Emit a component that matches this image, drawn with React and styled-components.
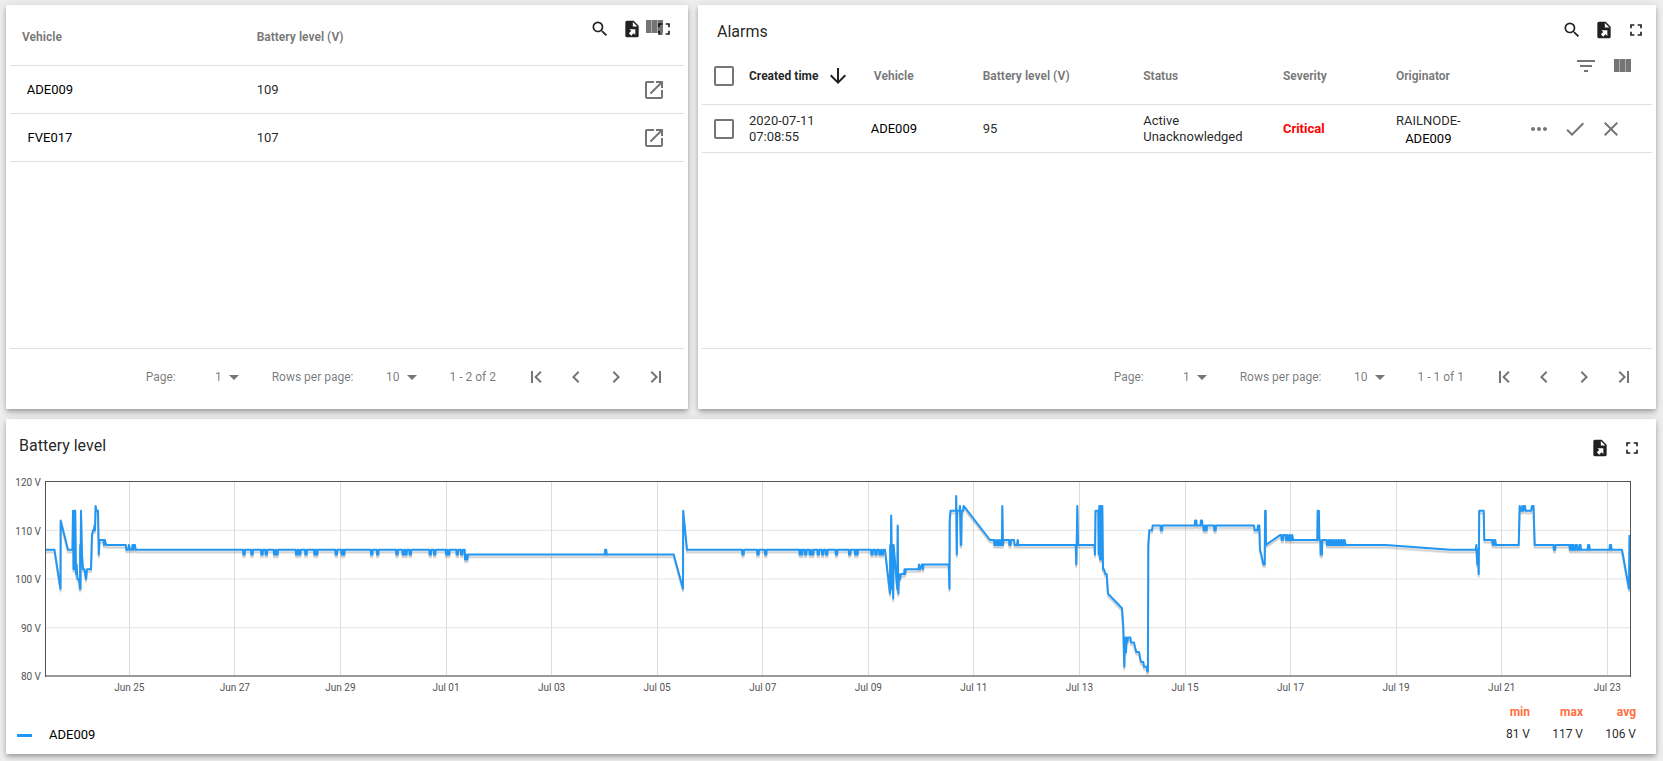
import { useState } from "react";
import styled, { createGlobalStyle } from "styled-components";
import {
  MdArrowDownward,
  MdCheck,
  MdChevronLeft,
  MdChevronRight,
  MdClose,
  MdFilterList,
  MdFullscreen,
  MdMoreHoriz,
  MdOpenInNew,
  MdSearch,
} from "react-icons/md";

const vehicles = [
  { name: "ADE009", level: 109 },
  { name: "FVE017", level: 107 },
];

const alarms = [
  {
    date: "2020-07-11",
    time: "07:08:55",
    vehicle: "ADE009",
    level: 95,
    status: ["Active", "Unacknowledged"],
    severity: "Critical",
    originator: ["RAILNODE-", "ADE009"],
  },
];

// short spikes from one level to another, one for each x
const blips = (base, peak, xs) =>
  xs.flatMap((x) => [[x - 1, base], [x - 0.6, peak], [x + 0.6, peak], [x + 1, base]]);

const series = [
  [45, 106], [54.5, 106], [60.5, 98], [60.7, 112], [68, 106], [72.5, 106], [73, 114], [73.5, 102],
  [74, 114], [74.7, 102], [75.2, 114], [76, 101], [76.6, 103], [77.5, 100], [79, 100], [80, 98],
  [80.2, 107], [80.5, 98], [81, 114], [82, 105], [83, 102], [84.5, 102], [86, 100], [87, 102],
  [91, 102], [92, 109], [93, 110], [94, 110], [94.5, 111], [95, 110], [95.6, 115], [96.5, 114],
  [98, 114], [98.8, 105], [99.5, 108], [103.5, 108], [104, 107], [105, 108], [106, 107],
  [125.8, 107], [126.4, 106], [128, 106], [129, 107], [130, 106], [132, 106], [132.5, 107],
  [133.3, 106], [134, 107], [135, 107], [135.6, 106],
  ...blips(106, 105, [
    244, 252, 262, 266.3, 274.7, 277, 296.7, 299.7, 306, 315, 316.7, 336.3, 342.3, 343.7, 371.7,
    377.7, 397, 403.3, 406, 410.3, 430.3, 434.7, 446.7, 448.7, 457.3, 461.7,
  ]),
  [464.7, 106], [465, 104], [466, 105], [466.6, 104], [467.4, 104], [468, 105],
  ...blips(105, 106, [605.7]),
  [673.7, 105], [683, 98], [683.2, 114], [687, 106],
  ...blips(106, 105, [
    743, 758, 765.7, 800.3, 801.7, 805.7, 810.3, 812.7, 818.3, 822.7, 826.7, 836.5, 849.7, 855.7,
    857, 872, 876, 880, 882.3,
  ]),
  [885, 106], [890, 97], [890.2, 107], [890.6, 98], [891.2, 113], [892, 98], [892.6, 107],
  [893.2, 96], [893.6, 107], [897.3, 98], [897.7, 111], [898.3, 97], [899, 101], [900, 100],
  [901, 101], [904, 101], [904.5, 102], [905, 101], [906, 102], [918.5, 102], [919, 103],
  [920, 102], [922, 103], [923, 102], [923.5, 103], [948.7, 103], [949.5, 98], [949.7, 112],
  [950.5, 114], [956, 114], [956.2, 117], [956.8, 105], [957.2, 114], [959.5, 114], [960, 115],
  [960.8, 107], [961.2, 107], [961.7, 114], [963, 114], [963.7, 115], [990, 108], [994, 108],
  ...blips(108, 107, [995, 997, 999, 1001]),
  [1002, 108], [1002.3, 115], [1003, 107], [1003.6, 108],
  ...blips(108, 107, [1010]),
  [1014, 108], [1014.6, 107], [1017, 107], [1017.7, 108], [1018.4, 107], [1075.7, 107],
  [1076.3, 103], [1076.7, 107], [1077.3, 115], [1078, 107], [1094.5, 107], [1095, 105],
  [1095.5, 114], [1098.3, 114], [1098.7, 105], [1099.3, 115], [1100, 104], [1100.6, 115],
  [1101.2, 104], [1101.7, 115], [1102.3, 115], [1103, 102], [1104, 102], [1105.3, 101],
  [1106.7, 101], [1108, 97], [1122, 94], [1123.3, 90], [1124.3, 82], [1125, 88], [1126, 85],
  [1126.5, 88], [1127.3, 87], [1128, 88], [1130.3, 88], [1131, 87], [1134, 87], [1135, 86],
  [1136.3, 85], [1139, 85], [1141, 83], [1143.3, 83], [1144, 82], [1146.7, 82], [1147.3, 81],
  [1147.9, 81], [1148.3, 107], [1149.3, 110], [1152, 110], [1152.7, 111],
  ...blips(111, 110, [1161.5]),
  ...blips(111, 112, [1195.7, 1201.5]),
  ...blips(111, 110, [1204.3, 1206, 1215]),
  [1254, 111], [1254.7, 110], [1257.3, 110], [1258, 111], [1259.3, 111], [1260, 106],
  [1261.3, 105], [1263.3, 103], [1264.7, 103], [1265.1, 114], [1265.7, 114], [1266, 107],
  [1280, 109],
  ...blips(109, 108, [1282.3, 1286.5, 1288.5, 1291]),
  [1292.3, 109], [1293, 108],
  ...blips(108, 114, [1318.3]),
  ...blips(108, 105, [1321.3]),
  ...blips(108, 107, [1327.5, 1330, 1332.5, 1335, 1337.5, 1340, 1342.5]),
  [1344, 107], [1344.6, 108], [1345.6, 107], [1385.7, 107], [1450.3, 106], [1475.7, 106],
  [1476.3, 107], [1477.3, 103], [1478, 106], [1478.7, 101], [1479.2, 114], [1483.7, 114],
  [1484.3, 108], [1492, 108], [1492.7, 107], [1494, 108], [1494.6, 107], [1495.2, 108],
  [1496, 107], [1518.7, 107], [1519.7, 115], [1520.7, 114], [1521.7, 114], [1522.3, 115],
  [1523.3, 114], [1524, 115], [1525, 115], [1525.7, 114], [1531, 114], [1532, 115],
  [1533.5, 115], [1534.7, 107],
  ...blips(107, 106, [1554.5]),
  [1569.3, 107], [1570, 106],
  ...blips(106, 107, [1571.5, 1573, 1576.3, 1580, 1588.7, 1610.5]),
  [1622, 106], [1629, 98], [1629.5, 109],
];

const PLOT_START = 45;
const PLOT_WIDTH = 1586;
const PLOT_HEIGHT = 196;

const yOf = (volts) => 0.5 + ((120 - volts) * (PLOT_HEIGHT - 1)) / 40;
const linePoints = series.map(([x, v]) => `${x},${yOf(v).toFixed(1)}`).join(" ");

const voltTicks = [120, 110, 100, 90, 80];
const dayTicks = [
  "Jun 25", "Jun 27", "Jun 29", "Jul 01", "Jul 03", "Jul 05", "Jul 07", "Jul 09",
  "Jul 11", "Jul 13", "Jul 15", "Jul 17", "Jul 19", "Jul 21", "Jul 23",
].map((label, i) => ({
  label,
  x: `${((84.3 + i * 105.57) / PLOT_WIDTH) * 100}%`,
}));

const FileExportIcon = ({ size }) => (
  <svg width={size} height={size} viewBox="0 0 24 24" fill="currentColor">
    <path
      fillRule="evenodd"
      d="M6,2C4.89,2 4,2.9 4,4V20A2,2 0 0,0 6,22H18A2,2 0 0,0 20,20V8L14,2M13,3.5L18.5,9H13M8.93,12.22H16V19.29L13.88,17.17L11.05,20L8.22,17.17L11.05,14.35"
    />
  </svg>
);

const ViewColumnIcon = ({ size }) => (
  <svg width={size} height={size} viewBox="0 0 24 24" fill="currentColor">
    <path d="M9.7 18h5.6V5H9.7v13zM4 18h5.3V5H4v13zM15.7 5v13H21V5h-5.3z" />
  </svg>
);

const FirstPageIcon = ({ size }) => (
  <svg width={size} height={size} viewBox="0 0 24 24" fill="currentColor">
    <path d="M7 6v12h2V6zM17.6 7.4L16.2 6l-6 6 6 6 1.4-1.4L13 12z" />
  </svg>
);

const LastPageIcon = ({ size }) => (
  <svg width={size} height={size} viewBox="0 0 24 24" fill="currentColor">
    <path d="M15 6v12h2V6zM8 6L6.6 7.4l4.6 4.6-4.6 4.6L8 18l6-6z" />
  </svg>
);

const WidgetActions = ({ search, ...rest }) => (
  <Actions {...rest}>
    {search && (
      <ToolButton type="button" aria-label="Search"><MdSearch size={20} /></ToolButton>
    )}
    <ToolButton type="button" aria-label="Export widget"><FileExportIcon size={20} /></ToolButton>
    <ToolButton type="button" aria-label="Fullscreen"><MdFullscreen size={20} /></ToolButton>
  </Actions>
);

const Picker = ({ id, label, options }) => {
  const [value, setValue] = useState(options[0]);

  return (
    <PickerWrapper>
      <label htmlFor={id}>{label}</label>
      <SelectBox>
        <Select id={id} value={value} onChange={(event) => setValue(event.target.value)}>
          {options.map((option) => (
            <option key={option} value={option}>{option}</option>
          ))}
        </Select>
        <svg width="10" height="5" viewBox="0 0 10 5" fill="currentColor">
          <path d="M0 0h10L5 5z" />
        </svg>
      </SelectBox>
    </PickerWrapper>
  );
};

const Pagination = ({ id, range }) => (
  <PaginationBar>
    <Picker id={`${id}-page`} label="Page:" options={["1"]} />
    <Picker id={`${id}-rows`} label="Rows per page:" options={["10", "20", "30"]} />
    <span>{range}</span>
    <Pager>
      <PagerButton type="button" aria-label="First page"><FirstPageIcon size={24} /></PagerButton>
      <PagerButton type="button" aria-label="Previous page"><MdChevronLeft size={24} /></PagerButton>
      <PagerButton type="button" aria-label="Next page"><MdChevronRight size={24} /></PagerButton>
      <PagerButton type="button" aria-label="Last page"><LastPageIcon size={24} /></PagerButton>
    </Pager>
  </PaginationBar>
);

const VehiclesWidget = () => (
  <Card>
    <WidgetActions search $floating />
    <TableArea>
      <Table>
        <colgroup>
          <Col $width="36.6%" />
          <Col />
          <Col $width="60px" />
        </colgroup>
        <thead>
          <tr>
            <Th $indent={12}>Vehicle</Th>
            <Th>Battery level (V)</Th>
            <ToolsTh>
              <IconRow $end={18}>
                <CellButton type="button" aria-label="Columns"><ViewColumnIcon size={24} /></CellButton>
              </IconRow>
            </ToolsTh>
          </tr>
        </thead>
        <tbody>
          {vehicles.map((vehicle) => (
            <tr key={vehicle.name}>
              <Td $indent={12}><VehicleName>{vehicle.name}</VehicleName></Td>
              <Td>{vehicle.level}</Td>
              <Td>
                <IconRow $end={18}>
                  <CellButton type="button" aria-label={`Open ${vehicle.name}`}>
                    <MdOpenInNew size={24} />
                  </CellButton>
                </IconRow>
              </Td>
            </tr>
          ))}
        </tbody>
      </Table>
    </TableArea>
    <Pagination id="vehicles" range="1 - 2 of 2" />
  </Card>
);

const AlarmsWidget = () => (
  <Card>
    <TitleBar>
      <Title $indent={15}>Alarms</Title>
      <WidgetActions search $top={5} />
    </TitleBar>
    <TableArea>
      <Table>
        <colgroup>
          <Col $width="47px" />
          <Col $width="12.3%" />
          <Col $width="12.3%" />
          <Col $width="16.9%" />
          <Col $width="14.7%" />
          <Col $width="11.9%" />
          <Col />
          <Col $width="131px" />
        </colgroup>
        <thead>
          <tr>
            <Th $indent={12}><Checkbox type="checkbox" aria-label="Select all alarms" /></Th>
            <Th $active>
              <SortLabel>
                Created time
                <MdArrowDownward size={24} />
              </SortLabel>
            </Th>
            <Th $indent={8}>Vehicle</Th>
            <Th>Battery level (V)</Th>
            <Th>Status</Th>
            <Th>Severity</Th>
            <Th>Originator</Th>
            <ToolsTh>
              <IconRow $end={18}>
                <CellButton type="button" aria-label="Filter"><MdFilterList size={24} /></CellButton>
                <CellButton type="button" aria-label="Columns"><ViewColumnIcon size={24} /></CellButton>
              </IconRow>
            </ToolsTh>
          </tr>
        </thead>
        <tbody>
          {alarms.map((alarm) => (
            <tr key={alarm.date + alarm.time}>
              <Td $indent={12}><Checkbox type="checkbox" aria-label="Select alarm" /></Td>
              <Td>{alarm.date}<br />{alarm.time}</Td>
              <Td><VehicleName>{alarm.vehicle}</VehicleName></Td>
              <Td>{alarm.level}</Td>
              <Td>{alarm.status[0]}<br />{alarm.status[1]}</Td>
              <Td><Severity>{alarm.severity}</Severity></Td>
              <Td>
                <Originator>
                  {alarm.originator[0]}<br />
                  <b>{alarm.originator[1]}</b>
                </Originator>
              </Td>
              <Td>
                <IconRow $end={29}>
                  <CellButton type="button" aria-label="Details"><MdMoreHoriz size={24} /></CellButton>
                  <CellButton type="button" aria-label="Acknowledge"><MdCheck size={24} /></CellButton>
                  <CellButton type="button" aria-label="Clear"><MdClose size={24} /></CellButton>
                </IconRow>
              </Td>
            </tr>
          ))}
        </tbody>
      </Table>
    </TableArea>
    <Pagination id="alarms" range="1 - 1 of 1" />
  </Card>
);

const Chart = () => (
  <ChartRow>
    <YAxis>
      {voltTicks.map((volts) => (
        <span key={volts}>{volts} V</span>
      ))}
    </YAxis>
    <Plot role="img" aria-label="Battery level of ADE009">
      {voltTicks.slice(1, 4).map((volts) => (
        <line key={volts} x1="0" x2="100%" y1={yOf(volts)} y2={yOf(volts)} stroke="#e2e2e2" />
      ))}
      {dayTicks.map((day) => (
        <g key={day.label}>
          <line x1={day.x} x2={day.x} y1="0" y2={PLOT_HEIGHT} stroke="#dcdcdc" shapeRendering="crispEdges" />
          <text x={day.x} y="210" textAnchor="middle">{day.label}</text>
        </g>
      ))}
      <svg
        width="100%"
        height={PLOT_HEIGHT}
        viewBox={`${PLOT_START} 0 ${PLOT_WIDTH} ${PLOT_HEIGHT}`}
        preserveAspectRatio="none"
        fill="none"
        strokeLinejoin="round"
      >
        <polyline points={linePoints} transform="translate(0 3)" stroke="#000" strokeOpacity="0.1" strokeWidth="2" />
        <polyline points={linePoints} transform="translate(0 2)" stroke="#000" strokeOpacity="0.1" strokeWidth="2" />
        <polyline points={linePoints} stroke="#2196f3" strokeWidth="2" />
      </svg>
      {/* the plot clips the outer half of the frame's side and top strokes */}
      <line x1="0" x2="100%" y1={PLOT_HEIGHT - 1} y2={PLOT_HEIGHT - 1} stroke="#999" strokeWidth="2" />
      <Frame x1="0" x2="100%" y1="0" y2="0" />
      <Frame x1="0" x2="0" y1="0" y2={PLOT_HEIGHT} />
      <Frame x1="100%" x2="100%" y1="0" y2={PLOT_HEIGHT} />
    </Plot>
  </ChartRow>
);

const BatteryWidget = () => (
  <Card>
    <TitleBar $tall>
      <Title $indent={9}>Battery level</Title>
      <WidgetActions $top={9} />
    </TitleBar>
    <Chart />
    <Legend>
      <LegendItem><Swatch />ADE009</LegendItem>
      <Stats>
        <thead>
          <tr><th>min</th><th>max</th><th>avg</th></tr>
        </thead>
        <tbody>
          <tr><td>81 V</td><td>117 V</td><td>106 V</td></tr>
        </tbody>
      </Stats>
    </Legend>
  </Card>
);

const App = () => (
  <>
    <GlobalStyle />
    <Page>
      <TopRow>
        <VehiclesWidget />
        <AlarmsWidget />
      </TopRow>
      <BatteryWidget />
    </Page>
  </>
);

const GlobalStyle = createGlobalStyle`
  * {
    box-sizing: border-box;
  }
  body {
    margin: 0;
    background: #eee;
    color: rgba(0, 0, 0, 0.87);
    font-family: Roboto, "Liberation Sans", sans-serif;
    font-size: 13px;
  }
  button, select {
    font: inherit;
    color: inherit;
    background: none;
    border: none;
    padding: 0;
    margin: 0;
    cursor: pointer;
  }
  svg {
    display: block;
  }
`;
const Page = styled.main`
  display: flex;
  flex-direction: column;
  gap: 10px;
  min-height: 100vh;
  padding: 5px 7px 7px 6px;
`;
const TopRow = styled.div`
  flex: 1;
  display: grid;
  grid-template-columns: minmax(0, 682fr) minmax(0, 958fr);
  gap: 10px;
`;
const Card = styled.section`
  position: relative;
  display: flex;
  flex-direction: column;
  padding: 4px;
  background: white;
  border-radius: 1px;
  box-shadow: 0 2px 4px -1px rgba(0, 0, 0, 0.2), 0 4px 5px 0 rgba(0, 0, 0, 0.14),
    0 1px 10px 0 rgba(0, 0, 0, 0.12);
`;
const TitleBar = styled.header`
  display: flex;
  justify-content: space-between;
  align-items: flex-start;
  height: ${({ $tall }) => ($tall ? 53 : 39)}px;
  padding-right: ${({ $tall }) => ($tall ? 4 : 0)}px;
`;
const Title = styled.h2`
  margin: 0;
  padding: 11px 0 0 ${({ $indent }) => $indent}px;
  font-size: 16px;
  font-weight: 400;
  line-height: 24px;
`;
const Actions = styled.div`
  display: flex;
  padding-top: ${({ $top = 0 }) => $top}px;
  ${({ $floating }) => $floating && `
    position: absolute;
    top: 8px;
    right: 8px;
    z-index: 1;
  `}
`;
const ToolButton = styled.button`
  width: 32px;
  height: 32px;
  display: grid;
  place-items: center;
  color: rgba(0, 0, 0, 0.87);
`;
const TableArea = styled.div`
  flex: 1;
`;
const Table = styled.table`
  width: 100%;
  table-layout: fixed;
  border-collapse: separate;
  border-spacing: 0;
`;
const Col = styled.col`
  width: ${({ $width }) => $width || "auto"};
`;
const Th = styled.th`
  height: 57px;
  padding: 0 0 0 ${({ $indent = 0 }) => $indent}px;
  border-bottom: 1px solid rgba(0, 0, 0, 0.12);
  text-align: left;
  font-size: 12px;
  font-weight: 700;
  color: ${({ $active }) => ($active ? "rgba(0, 0, 0, 0.87)" : "rgba(0, 0, 0, 0.54)")};
  white-space: nowrap;
`;
const ToolsTh = styled(Th)`
  vertical-align: top;
  padding-top: 6px;
`;
const Td = styled.td`
  height: 48px;
  padding: 0 0 0 ${({ $indent = 0 }) => $indent}px;
  border-bottom: 1px solid rgba(0, 0, 0, 0.12);
  line-height: 16px;
`;
const SortLabel = styled.span`
  display: flex;
  align-items: center;
  gap: 8px;
`;
const VehicleName = styled.div`
  width: 56px;
  text-align: center;
  color: black;
`;
const Severity = styled.span`
  font-weight: 700;
  color: red;
`;
const Originator = styled.div`
  width: fit-content;
  padding-top: 2px;
  text-align: center;
  line-height: 18px;

  b {
    font-weight: 400;
    color: black;
  }
`;
const IconRow = styled.div`
  display: flex;
  justify-content: flex-end;
  gap: 12px;
  padding-right: ${({ $end }) => $end}px;
`;
const CellButton = styled.button`
  width: 24px;
  height: 24px;
  color: rgba(0, 0, 0, 0.54);
`;
const Checkbox = styled.input`
  appearance: none;
  display: block;
  width: 20px;
  height: 20px;
  margin: 0;
  border: 2px solid rgba(0, 0, 0, 0.54);
  border-radius: 2px;

  &:checked {
    background: rgba(0, 0, 0, 0.54);
  }
`;
// pagination styles
const PaginationBar = styled.footer`
  display: flex;
  justify-content: flex-end;
  align-items: center;
  height: 57px;
  padding-right: 8px;
  border-top: 1px solid rgba(0, 0, 0, 0.12);
  font-size: 12px;
  color: rgba(0, 0, 0, 0.54);
`;
const PickerWrapper = styled.div`
  display: flex;
  align-items: center;
  gap: 16px;
  margin-right: 32px;
`;
const SelectBox = styled.div`
  display: grid;
  align-items: center;
  width: 48px;
  padding-right: 1px;

  > * {
    grid-area: 1 / 1;
  }
  svg {
    justify-self: end;
    pointer-events: none;
  }
`;
const Select = styled.select`
  appearance: none;
  width: 100%;
  height: 24px;
  padding-right: 17px;
  text-align: right;
  text-align-last: right;
`;
const Pager = styled.div`
  display: flex;
  margin-left: 20px;
`;
const PagerButton = styled.button`
  width: 40px;
  height: 40px;
  display: grid;
  place-items: center;
`;
// chart styles
const ChartRow = styled.div`
  display: flex;
  gap: 4px;
  padding-right: 21px;
`;
const YAxis = styled.div`
  display: flex;
  flex-direction: column;
  justify-content: space-between;
  width: 31px;
  height: 206px;
  margin-top: 1px;
  text-align: right;
  font-size: 10px;
  line-height: 12px;
  color: #545454;
`;
const Plot = styled.svg`
  flex: 1;
  min-width: 0;
  height: 214px;
  margin-top: 5px;

  text {
    font-size: 10px;
    fill: #545454;
  }
`;
const Frame = styled.line`
  stroke: #545454;
  stroke-width: 2px;
`;
const Legend = styled.div`
  display: flex;
  justify-content: space-between;
  align-items: flex-end;
  padding: 5px 16px 5px 7px;
`;
const LegendItem = styled.div`
  display: flex;
  align-items: center;
  gap: 17px;
  line-height: 20px;
  color: black;
`;
const Swatch = styled.span`
  width: 15px;
  height: 3px;
  background: #2196f3;
`;
const Stats = styled.table`
  border-spacing: 0;
  font-size: 12px;
  text-align: right;

  th, td {
    min-width: 53px;
    height: 22px;
    padding: 0;
  }
  th {
    height: 23px;
    color: #ff6e40;
  }
`;

export default App;
